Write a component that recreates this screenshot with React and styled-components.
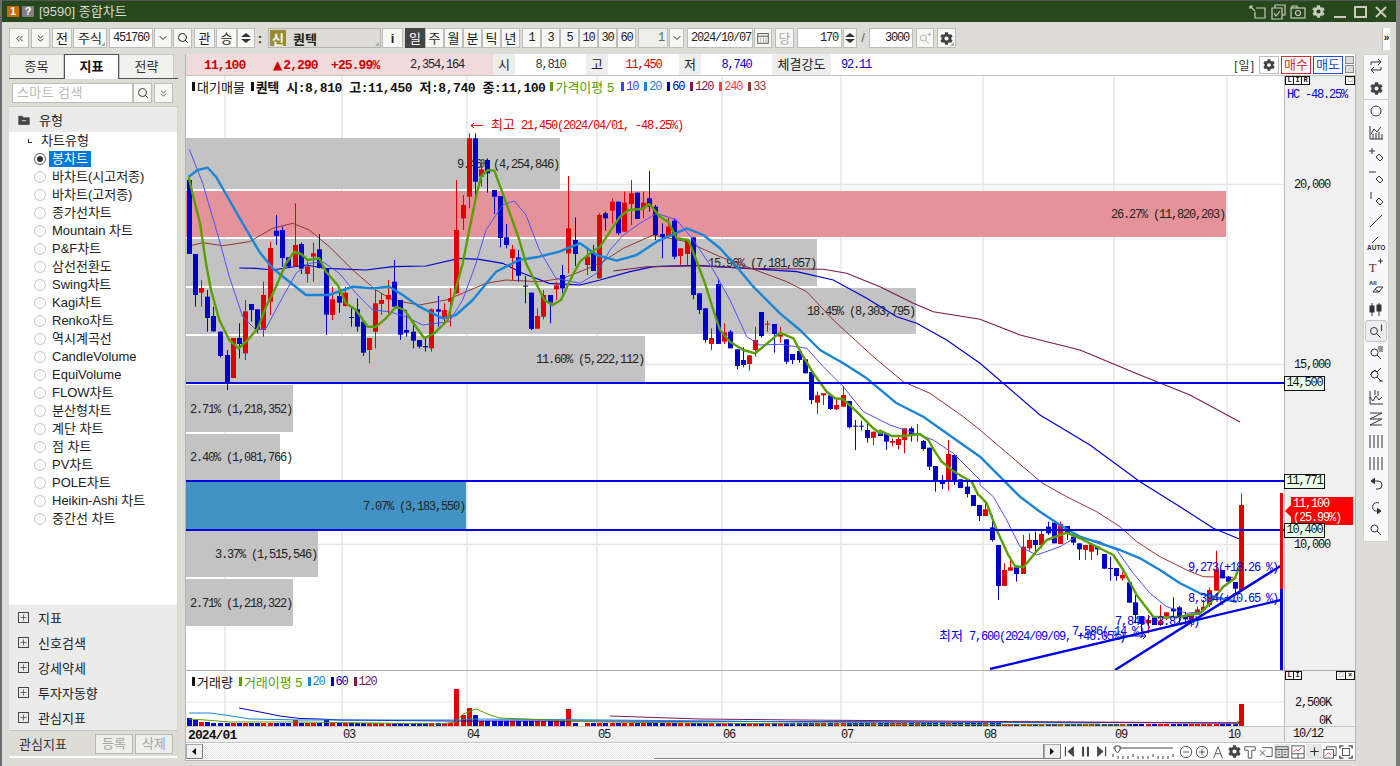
import React from "react";
import styled, { createGlobalStyle, css } from "styled-components";
import { Search, ChevronDown, ChevronsDown, ChevronsLeft, Plus } from "lucide-react";
import { FaCog } from "react-icons/fa";

const KR = `"Liberation Sans", "Noto Sans CJK KR", sans-serif`;
const mono = css`
  font-family: "Liberation Mono", "Noto Sans CJK KR", monospace;
  font-size: 12px;
  letter-spacing: -1.2px;
`;

const Global = createGlobalStyle`
  html, body { margin: 0; padding: 0; background: #7c7c7c; }
  * { box-sizing: border-box; }
`;

const Window = styled.div`
  width: 1396px; height: 766px; overflow: hidden; background: #dddcd6;
  border-left: 2px solid #6d6d6d; font-family: ${KR}; font-size: 13px; color: #222;
`;
const TitleBar = styled.div`
  height: 22px; background: #26481c; border-top: 1px solid #555; display: flex; align-items: center;
  padding-left: 5px; color: #d8dcd0; font-size: 13px;
`;
const TitleBadge = styled.span`
  width: 12px; height: 11px; background: ${p => p.$bg}; color: #fff; font: bold 11px/11px "Liberation Sans", sans-serif;
  text-align: center; margin-right: 3px;
`;
const TitleText = styled.span` margin-left: 2px; line-height: 1; `;
const WinIcons = styled.div` margin-left: auto; display: flex; align-items: center; gap: 3px; padding-right: 5px; `;

const Toolbar = styled.div` height: 32px; padding: 6px 0 0 7px; display: flex; align-items: flex-start; `;
const Btn = styled.button`
  width: ${p => p.$w}px; height: 20px; margin-left: ${p => p.$ml || 0}px; padding: 0; position: relative;
  background: ${p => (p.$on ? "#444" : "#f7f7f5")}; color: ${p => (p.$on ? "#fff" : p.$dim ? "#aaa" : "#222")};
  border: 1px solid ${p => (p.$on ? "#444" : "#bdbcb6")}; font-family: ${KR}; font-size: 13px; line-height: 1;
  display: flex; align-items: center; justify-content: center; flex: none;
  ${p => p.$num && mono}
  ${p => p.$corner && `&::after { content: ""; position: absolute; right: 1px; bottom: 1px; border: 2px solid #aaa; border-top-color: transparent; border-left-color: transparent; }`}
`;
const Field = styled.div`
  ${mono}
  width: ${p => p.$w}px; height: 20px; margin-left: ${p => p.$ml || 0}px; background: ${p => p.$bg || "#fff"};
  border: 1px solid #bdbcb6; line-height: 18px; color: ${p => p.$c || "#222"};
  text-align: ${p => p.$align || "left"}; padding: 0 3px; flex: none; white-space: nowrap; overflow: hidden;
`;
const Stepper = styled.div`
  width: ${p => p.$w}px; height: 20px; margin-left: ${p => p.$ml || 0}px; display: flex; flex-direction: column; gap: 2px;
  background: #f7f7f5; border: 1px solid #bdbcb6; align-items: center; justify-content: center; flex: none;
`;
const Tri = styled.i`
  width: 0; height: 0; border-left: 5px solid transparent; border-right: 5px solid transparent;
  ${p => (p.$down ? "border-top: 4px solid #333;" : "border-bottom: 4px solid #333;")}
`;
const DotsBtn = styled(Btn)` font-weight: bold; background: #dddcd6; border: none; `;
const NameBox = styled.div`
  width: 113px; height: 20px; margin-left: 4px; background: #dddcd6; border: 1px solid #b5b4ae; display: flex; align-items: center;
  position: relative; flex: none;
  &::after { content: ""; position: absolute; right: 1px; bottom: 1px; border: 2px solid #aaa; border-top-color: transparent; border-left-color: transparent; }
`;
const NewTag = styled.span`
  width: 16px; height: 16px; margin-left: 1px; background: #9a8c2e; color: #fff; font-size: 13px; font-weight: bold;
  display: flex; align-items: center; justify-content: center;
`;
const NameText = styled.span` margin-left: 7px; font-weight: bold; font-size: 13px; `;
const Slash = styled.span` width: 12px; text-align: center; color: #666; font: 13px/20px "Liberation Sans", sans-serif; flex: none; `;
const SideTab = styled.div`
  margin-left: auto; margin-right: 6px; width: 8px; height: 22px; background: #fafafa; border-left: 1px solid #bbb;
  font: bold 10px/20px "Liberation Sans", sans-serif; text-align: center; overflow: hidden;
`;

const Main = styled.div` display: flex; align-items: flex-start; padding-left: 7px; height: 712px; `;

const Left = styled.aside` width: 169px; height: 704px; display: flex; flex-direction: column; flex: none; `;
const Tabs = styled.div` display: flex; height: 25px; border-bottom: 1px solid #555; padding-right: 4px; `;
const Tab = styled.div`
  width: ${p => p.$w}px; text-align: center; line-height: 23px; font-size: 13px; height: ${p => (p.$on ? "25px" : "24px")};
  background: ${p => (p.$on ? "#fff" : "#f1f1ef")}; font-weight: ${p => (p.$on ? "bold" : "normal")};
  border: 1px solid ${p => (p.$on ? "#555" : "#c8c8c2")}; border-bottom: none; color: ${p => (p.$on ? "#111" : "#333")};
`;
const SearchRow = styled.div` display: flex; height: 20px; margin: 4px 0 3px 3px; `;
const SearchInput = styled.div`
  width: 121px; border: 1px solid #bdbcb6; background: #fff; color: #bbb; padding-left: 4px; line-height: 17px; font-size: 13px; letter-spacing: .4px;
`;
const SmallBtn = styled.div`
  width: ${p => p.$w}px; margin-left: ${p => p.$ml}px; background: #f7f7f5; border: 1px solid #bdbcb6; display: flex; align-items: center; justify-content: center;
`;
const Tree = styled.div` border: 1px solid #c8c8c2; border-width: 1px 0 0 0; flex: 1; display: flex; flex-direction: column; border-right: 1px solid #d6d6d0; `;
const TreeHead = styled.div`
  height: 25px; background: #ebebeb; display: flex; align-items: center; padding-left: 9px; gap: 9px; font-size: 13px;
`;
const TreeBody = styled.div` height: 473px; background: #fff; `;
const TreeRoot = styled.div` height: 18px; padding-left: 16px; display: flex; align-items: center; gap: 6px; line-height: 16px; color: #222; `;
const Corner = styled.span` width: 4px; height: 4px; border-left: 1px solid #333; border-bottom: 1px solid #333; margin-left: 3px; margin-right: 3px; `;
const Item = styled.div` height: 18px; display: flex; align-items: center; padding-left: 25px; `;
const Radio = styled.span`
  width: 12px; height: 12px; border-radius: 50%; border: 1px solid ${p => (p.$on ? "#555" : "#c4c4c4")}; background: #fff;
  display: flex; align-items: center; justify-content: center; flex: none;
  &::after { content: ""; width: 6px; height: 6px; border-radius: 50%; background: ${p => (p.$on ? "#333" : "transparent")}; }
`;
const ItemLabel = styled.span`
  margin-left: ${p => (p.$on ? "3px" : "6px")}; padding: 0 ${p => (p.$on ? "3px" : "0")}; line-height: 16px; white-space: nowrap;
  background: ${p => (p.$on ? "#0078d7" : "transparent")}; color: ${p => (p.$on ? "#fff" : "#222")};
`;
const Accordion = styled.div` height: 25px; background: #ebebeb; display: flex; align-items: center; padding-left: 9px; gap: 9px; font-size: 13px; `;
const FolderPlus = styled.span`
  width: 11px; height: 11px; border: 1px solid #444; display: flex; align-items: center; justify-content: center; color: #444;
`;
const Foot = styled.div` height: 28px; background: #dddcd6; border-top: 1px solid #c8c8c2; display: flex; align-items: center; padding: 0 4px 0 10px; border-bottom: 2px solid #fff; `;
const FootLabel = styled.span` flex: 1; font-size: 13px; color: #333; `;
const FootBtn = styled.div`
  width: 38px; height: 20px; margin-left: 2px; border: 1px solid #b9b9b3; background: #eeeeea; color: #a4a4a0; text-align: center; line-height: 18px;
`;

const ChartPanel = styled.section`
  width: 1171px; margin-left: 7px; height: 707px; border: 1px solid #b4b4b0; border-top: none; background: #fff; display: flex; flex-direction: column; flex: none;
`;
const Info = styled.div` height: 22px; display: flex; align-items: stretch; background: #fff; border-bottom: 1px solid #c2c2be; ${mono} `;
const InfoPink = styled.div` width: 307px; background: #f0dadb; position: relative; `;
const InfoVal = styled.span`
  position: absolute; left: ${p => p.$x}px; top: 4px; color: ${p => p.$c || "#222"}; line-height: 15px;
  ${p => p.$b && `font-weight: bold; font-size: 13px; letter-spacing: -.9px;`}
`;
const UpMark = styled.span` font-family: "DejaVu Sans", sans-serif; font-size: 12px; letter-spacing: 0; margin-right: 1px; `;
const InfoKey = styled.div` width: ${p => p.$w}px; background: #eeeeee; text-align: center; line-height: 21px; font-family: ${KR}; font-size: 13px; letter-spacing: 0; `;
const InfoCell = styled.div` width: ${p => p.$w}px; text-align: center; line-height: 22px; color: ${p => p.$c || "#333"}; `;
const InfoRight = styled.div` margin-left: auto; display: flex; align-items: center; gap: 2px; padding-right: 1px; `;
const DayTag = styled.span` margin-right: 2px; font-family: ${KR}; font-size: 12px; letter-spacing: 1px; color: #333; `;
const GearBtn = styled.div` width: 20px; height: 18px; border: 1px solid #bbb; display: flex; align-items: center; justify-content: center; color: #444; `;
const TradeBtn = styled.div`
  width: 30px; height: 18px; border: 1px solid ${p => p.$c}; color: ${p => p.$c}; text-align: center; line-height: 16px; font-family: ${KR}; font-size: 13px; letter-spacing: 0;
`;
const MiniCol = styled.div` display: flex; flex-direction: column; gap: 1px; `;
const Mini = styled.div` width: 9px; height: 8px; border: 1px solid #888; background: #ddd; `;

const PaneRow = styled.div` display: flex; height: ${p => p.$h}px; border-bottom: ${p => (p.$line ? "1px solid #aaa" : "none")}; `;
const Plot = styled.div` width: 1098px; position: relative; overflow: hidden; background: #fff; flex: none; `;
const PlotSvg = styled.svg` display: block; `;
const Axis = styled.div` flex: 1; background: #f0f0f0; border-left: 1px solid #bbb; position: relative; ${mono} `;
const Legend = styled.div`
  position: absolute; left: 6px; top: ${p => p.$t}px; display: flex; align-items: center; white-space: nowrap; font-size: 13px;
`;
const Mark = styled.i` width: 3px; height: 9px; background: ${p => p.$c}; margin: 0 ${p => p.$mr || 2}px 0 ${p => p.$ml || 0}px; display: inline-block; `;
const LegText = styled.span` color: ${p => p.$c || "#111"}; font-weight: ${p => (p.$b ? "bold" : "normal")}; `;
const Ohlc = styled.span` ${mono} font-size: 13px; letter-spacing: -.45px; font-weight: bold; color: #111; `;
const LegNum = styled.span` ${mono} color: ${p => p.$c}; margin-right: 2px; `;
const Tick = styled.span` position: absolute; left: ${p => p.$x}px; top: ${p => p.$y}px; color: ${p => p.$c || "#111"}; white-space: nowrap; transform: translateY(-50%); `;
const Badge = styled.span`
  position: absolute; left: -1px; top: ${p => p.$y}px; width: 41px; height: 15px; background: #e9ffe9; border: 1px solid #111; line-height: 13px; text-align: center; color: #111; z-index: 3;
`;
const PriceFlag = styled.div`
  position: absolute; left: 6px; top: 421px; width: 62px; height: 28px; background: #f00; color: #fff; line-height: 14px; padding-left: 2px; overflow: hidden; white-space: pre; z-index: 2;
`;
const FlagArrow = styled.span`
  position: absolute; left: 0; top: 429px; border: 6px solid transparent; border-left: none; border-right: 6px solid #f00; z-index: 2;
`;
const BoxGroup = styled.div` position: absolute; left: 0; top: 0; display: flex; `;
const TinyBox = styled.span`
  width: ${p => p.$w || 9}px; height: 9px; border: 1px solid #111; background: #fff; font: bold 7px/7px "Liberation Mono", monospace; text-align: center; letter-spacing: 0; color: #111; margin-right: -1px;
`;
const BoxRight = styled.div` position: absolute; right: 1px; top: 0; display: flex; `;

const XRow = styled.div` height: 17px; display: flex; border-top: 1px solid #c4c4c0; border-bottom: 1px solid #c4c4c0; background: #efefef; ${mono} `;
const XPlot = styled.div` width: 1098px; position: relative; `;
const XTick = styled.span` position: absolute; left: ${p => p.$x}px; top: 1px; font-weight: ${p => (p.$b ? "bold" : "normal")}; font-size: ${p => (p.$b ? 13 : 12)}px; letter-spacing: ${p => (p.$b ? "-.9px" : "-1.2px")}; color: #111; `;
const XEnd = styled.div` flex: 1; border-left: 1px solid #bbb; padding-left: 8px; line-height: 14px; color: #111; `;
const ScrollRow = styled.div` height: 15px; display: flex; background: #fff; margin-top: 1px; `;
const ArrowBtn = styled.div`
  width: 17px; height: 15px; background: #efefef; border: 1px solid #aaa; border-right-color: #777; border-bottom-color: #777; display: flex; align-items: center; justify-content: center; flex: none;
`;
const Track = styled.div`
  width: 841px; display: flex; justify-content: flex-end; flex: none;
  background: repeating-conic-gradient(#e4e4e4 0 25%, #ffffff 0 50%) 0 0 / 2px 2px;
`;
const Thumb = styled.div` width: 390px; background: #f0f0f0; border-right: 1px solid #888; border-bottom: 1px solid #888; `;
const Tools = styled.div` flex: 1; display: flex; align-items: center; background: #fff; `;
const ToolSlot = styled.span`
  width: ${p => p.$w || 16}px; height: 15px; display: flex; align-items: center; justify-content: center; flex: none; margin-left: ${p => p.$ml || 0}px;
  background: ${p => (p.$on ? "#e6e6e6" : "transparent")};
`;

const Right = styled.aside` width: 26px; margin-left: 7px; flex: none; display: flex; flex-direction: column; background: #f8f8f8; border: 1px solid #d2d2cc; padding-bottom: 1px; `;
const RightGroup = styled.div` display: flex; flex-direction: column; align-items: center; & + & { border-top: 1px solid #ccc; } `;
const RightSlot = styled.div`
  width: 22px; height: 22px; display: flex; align-items: center; justify-content: center; border-radius: 3px;
  ${p => p.$on && `background:#eee; border:1px solid #c2c2c2;`}
`;

const z = (ox, oy, list) => list.map(([x, y]) => [ox + x / 3, oy + y / 3]);
const pts = (...segs) => segs.flat().map(p => p.map(n => n.toFixed(1)).join(",")).join(" ");
const Z7 = l => z(186, 130, l), Z9 = l => z(580, 160, l), Z8 = l => z(980, 480, l), Z11 = l => z(880, 420, l), R = l => z(0, 0, l.map(([a, b]) => [a * 3, b * 3]));

const ma5 = pts(
  Z7([[8,142],[22,200],[42,280],[60,400],[75,480],[100,570],[130,630],[158,655],[185,630],[215,595],[240,530],[270,470],[300,400],[325,365],[345,372],[365,390],[400,385],[420,425],[455,465],[480,520],[510,540],[545,590],[570,590],[600,565],[630,530],[655,540],[690,590],[715,625],[745,610],[785,570],[800,510],[830,400],[850,300],[870,200],[885,140],[905,120],[925,122],[950,190],[975,260],[1000,330],[1020,400],[1050,460],[1075,510],[1100,525],[1125,510],[1160,435]]),
  Z9([[0,305],[30,280],[60,260],[90,215],[120,170],[145,150],[185,147],[208,132],[240,170],[265,185],[290,235],[325,240],[345,290],[375,370],[400,450],[420,510],[450,545],[490,570],[525,580],[550,560],[600,518],[640,535],[670,590],[700,640],[740,695],[765,715],[790,718],[830,755],[880,805],[900,820]]),
  Z11([[0,32],[35,48],[70,48],[120,42],[145,60],[165,95],[185,125],[215,150],[250,172],[275,185],[295,225]]),
  Z8([[0,48],[20,70],[50,150],[85,225],[105,258],[130,262],[165,220],[200,180],[260,158],[300,175],[350,200],[400,225],[430,270],[470,345],[520,410],[560,412],[600,410],[660,400],[690,370],[730,320],[765,295],[775,265]])
);
const ma20 = pts(
  Z7([[8,140],[35,120],[65,113],[90,140],[130,210],[170,280],[220,365],[260,415],[310,455],[360,495],[430,495],[500,470],[560,475],[610,470],[650,495],[700,530],[770,565],[810,555],[860,510],[930,425],[1000,390],[1060,380],[1120,365]]),
  Z9([[0,250],[50,285],[110,302],[170,285],[230,245],[320,205],[370,225],[420,265],[470,320],[520,380],[600,460],[660,510],[720,570],[790,610],[860,655],[950,730],[1030,770],[1100,820],[1200,890]]),
  Z8([[75,5],[120,50],[180,95],[240,135],[300,170],[360,190],[420,210],[480,235],[540,270],[600,310],[660,340],[720,355],[770,365]])
);
const ma10 = pts(
  Z7([[10,58],[50,160],[100,330],[130,440],[170,560],[210,600],[240,595],[280,520],[330,430],[370,400],[410,395],[460,430],[510,490],[560,540],[610,545],[660,560],[710,585],[790,575],[830,510],[870,400],[900,300],[950,225],[985,213],[1020,255],[1060,360],[1110,445]]),
  Z9([[0,370],[50,340],[90,270],[130,225],[180,190],[230,160],[290,180],[340,240],[400,330],[450,420],[500,530],[540,555],[600,553],[680,565],[730,620],[790,680],[850,755],[930,795],[1020,825],[1060,840],[1120,880],[1200,960]]),
  Z8([[0,15],[40,50],[80,120],[120,200],[170,225],[240,200],[290,170],[360,185],[410,210],[460,280],[510,340],[560,380],[620,400],[660,395]])
);
const ma60 = pts(
  Z7([[160,414],[210,415],[260,420],[360,405],[420,415],[540,420],[620,410],[720,408],[820,385],[880,388],[950,400],[1010,430],[1090,460]]),
  Z9([[0,375],[60,360],[150,335],[220,320],[350,316],[500,325],[650,335],[760,360],[860,415],[950,470],[1010,490],[1100,540],[1200,610]]),
  R([[1040,415],[1090,445]]),
  Z8([[480,5],[600,80],[700,145],[780,178]])
);
const ma120 = pts(
  Z9([[100,333],[200,320],[350,317],[500,325],[730,328],[800,340],[900,380],[1000,430],[1060,455],[1200,478]]),
  R([[1020,335],[1080,350],[1140,375],[1190,395],[1240,422]])
);
const ma33 = pts(
  Z7([[10,348],[50,338],[110,347],[190,335],[260,295],[320,280],[370,300],[430,350],[500,420],[570,480],[620,510],[700,525],[780,510],[830,490],[900,460],[960,450],[1060,455],[1130,445]]),
  Z9([[0,335],[60,310],[130,265],[220,225],[320,245],[420,290],[500,320],[620,365],[680,395],[760,480],[880,590],[970,665],[1050,700],[1150,770],[1200,810]]),
  Z8([[185,8],[260,50],[350,95],[420,140],[470,185],[540,230],[620,270],[670,290],[760,292]])
);

const raw7 = [[10,150,372,150,372,"b"],[28,372,495,372,530,"b"],[46,474,488,450,530,"r"],[64,500,564,480,605,"b"],[82,558,604,530,605,"b"],[102,605,678,605,682,"b"],[122,675,760,660,780,"b"],[140,624,744,624,744,"r"],[158,624,642,580,685,"b"],[176,544,670,510,690,"r"],[196,522,540,522,575,"b"],[214,538,600,538,610,"b"],[232,495,600,455,620,"r"],[252,354,515,335,555,"r"],[270,302,318,255,345,"b"],[288,300,384,290,410,"b"],[306,382,410,382,412,"b"],[326,345,408,220,410,"r"],[346,342,416,338,432,"b"],[364,410,432,395,458,"r"],[382,370,380,338,455,"r"],[400,358,414,312,415,"b"],[420,414,554,414,615,"b"],[438,508,555,470,570,"r"],[458,498,518,475,548,"b"],[476,488,528,470,530,"r"],[494,561,563,530,590,"b"],[514,538,590,505,605,"b"],[532,575,668,575,678,"b"],[550,624,660,624,700,"r"],[568,520,605,480,655,"r"],[586,510,522,490,555,"r"],[606,495,508,450,550,"r"],[624,455,530,390,530,"b"],[642,510,614,510,630,"b"],[660,600,608,540,620,"b"],[682,605,632,570,655,"b"],[700,630,650,630,655,"b"],[718,648,652,620,665,"b"],[736,538,655,535,665,"r"],[756,538,545,498,590,"b"],[775,540,565,520,585,"r"],[793,505,515,475,590,"r"],[811,300,490,150,490,"r"],[830,225,265,195,300,"r"],[850,25,200,10,235,"r"],[868,25,155,10,215,"b"],[886,118,140,100,170,"r"],[904,90,130,85,188,"b"],[924,180,200,180,252,"b"],[942,198,324,198,352,"b"],[960,322,345,282,355,"b"],[978,358,384,345,450,"r"],[997,382,437,360,455,"b"],[1018,467,469,438,520,"b"],[1036,488,597,488,600,"b"],[1054,558,596,535,596,"r"],[1072,495,560,480,568,"r"],[1092,495,518,495,580,"b"],[1110,466,478,455,510,"r"],[1128,435,475,405,490,"b"],[1146,295,370,138,430,"r"],[1166,330,372,262,408,"b"]];
const raw9 = [[6,210,265,210,265,"b"],[22,290,315,265,345,"r"],[40,278,333,255,333,"b"],[58,165,355,160,355,"r"],[76,160,175,155,212,"b"],[97,125,152,115,190,"r"],[115,125,220,125,225,"b"],[133,128,215,95,215,"r"],[152,100,132,60,195,"r"],[172,98,177,98,177,"b"],[190,128,145,95,175,"r"],[208,115,140,33,155,"b"],[226,140,225,135,240,"b"],[246,222,232,190,295,"b"],[265,200,228,175,235,"r"],[283,182,290,175,298,"b"],[301,265,288,265,315,"r"],[320,240,282,240,315,"r"],[340,232,405,232,418,"b"],[358,400,450,400,462,"b"],[376,445,540,445,548,"b"],[394,534,552,505,570,"r"],[413,372,552,355,552,"b"],[432,517,545,490,552,"r"],[450,515,565,510,565,"b"],[470,568,618,568,628,"b"],[488,600,615,562,622,"b"],[508,586,612,586,632,"r"],[526,540,570,500,590,"r"],[544,456,528,456,533,"b"],[562,491,493,482,515,"r"],[582,492,522,492,578,"b"],[600,522,530,500,548,"r"],[618,538,605,538,612,"b"],[637,582,600,582,612,"b"],[656,573,600,573,608,"b"],[676,598,640,598,640,"b"],[694,636,720,636,732,"b"],[712,706,728,695,762,"r"],[730,700,706,700,735,"r"],[750,706,747,706,750,"b"],[769,735,748,715,750,"r"],[788,705,740,678,740,"r"],[806,723,802,723,805,"b"],[826,797,799,780,870,"b"],[844,797,799,782,812,"b"],[862,810,834,788,848,"b"],[880,815,833,815,855,"r"]];
const raw11 = [[0,40,48,40,48,"b"],[18,40,65,40,90,"b"],[37,63,68,55,78,"r"],[55,57,75,45,88,"r"],[73,25,60,25,100,"r"],[92,25,42,20,65,"b"],[112,41,43,12,65,"r"],[130,63,87,60,92,"b"],[148,83,140,83,150,"b"],[166,138,185,138,215,"b"],[185,182,192,165,207,"b"],[205,102,180,60,212,"r"],[223,105,180,105,195,"b"],[241,178,204,178,204,"b"],[260,200,222,183,232,"b"],[280,225,258,225,258,"b"],[298,255,288,255,303,"b"]];
const raw8 = [[15,88,108,60,108,"r"],[35,142,180,105,185,"b"],[55,195,318,195,360,"b"],[73,270,318,250,318,"r"],[91,262,272,230,272,"r"],[109,262,282,262,305,"b"],[128,200,282,165,282,"r"],[148,180,205,160,212,"r"],[166,180,195,155,225,"b"],[184,162,195,150,205,"r"],[203,140,160,125,165,"b"],[221,128,190,128,190,"b"],[240,132,192,125,192,"r"],[260,138,160,138,180,"b"],[278,170,188,160,195,"b"],[297,190,208,190,240,"b"],[316,195,210,195,240,"r"],[334,192,215,192,240,"r"],[352,200,208,200,225,"b"],[371,222,266,222,266,"b"],[391,264,266,230,302,"b"],[409,264,288,264,302,"b"],[427,285,295,275,302,"r"],[446,307,368,307,368,"b"],[465,367,405,345,430,"b"],[484,408,432,408,455,"b"],[503,420,430,405,460,"r"],[521,412,435,412,435,"b"],[540,422,435,375,438,"r"],[558,397,415,397,420,"r"],[578,386,394,352,410,"b"],[596,382,408,378,430,"b"],[615,408,418,395,440,"b"],[633,402,420,400,440,"r"],[652,388,405,380,405,"r"],[670,380,390,360,395,"r"],[688,330,375,322,380,"r"],[707,268,332,212,332,"r"],[726,270,295,270,295,"b"],[745,290,305,288,305,"b"],[764,306,326,306,340,"b"],[782,75,330,40,330,"r"]];
const conv = (ox, oy, l) => l.map(([x, t, b, wt, wb, c]) => ({ x: ox + x / 3, t: oy + t / 3, b: oy + b / 3, wt: oy + wt / 3, wb: oy + wb / 3, c }));
const candles = [...conv(186, 130, raw7), ...conv(580, 160, raw9.slice(1)), ...conv(880, 420, raw11), ...conv(980, 480, raw8)];
const COL = { r: "#e00000", b: "#0000c8" };

const volH = x => {
  if (x < 192) return 8;
  if (x < 198) return 6;
  if (x < 210) return 4;
  if (Math.abs(x - 456) < 2) return 37;
  if (Math.abs(x - 463) < 2) return 11;
  if (Math.abs(x - 469) < 2) return 18;
  if (Math.abs(x - 475) < 2) return 11;
  if (Math.abs(x - 568) < 2) return 17;
  if (x > 1238) return 22;
  if (x > 480 && x < 570) return 5;
  if (x > 1000) return 2;
  if (Math.abs(x - 295) < 2 || Math.abs(x - 326) < 2) return 6;
  return 3;
};

const grids = [225, 342, 467, 597, 722, 841, 983, 1114, 1227];
const bars = [
  { y: 138, h: 51, r: 560, t: "9.46% (4,254,846)" },
  { y: 191, h: 46, r: 1226, t: "26.27% (11,820,203)", c: "#e4939a" },
  { y: 239, h: 47, r: 817, t: "15.96% (7,181,057)" },
  { y: 288, h: 46, r: 916, t: "18.45% (8,303,795)" },
  { y: 336, h: 46, r: 645, t: "11.60% (5,222,112)" },
  { y: 385, h: 47, r: 293, t: "2.71% (1,218,352)" },
  { y: 434, h: 46, r: 280, tx: 293, t: "2.40% (1,081,766)" },
  { y: 482, h: 47, r: 466, t: "7.07% (3,183,550)", c: "#4292c6" },
  { y: 531, h: 46, r: 318, t: "3.37% (1,515,546)" },
  { y: 579, h: 47, r: 293, t: "2.71% (1,218,322)" },
];
const ChartText = styled.text` ${mono} fill: ${p => p.$c || "#222"}; `;
const KrSpan = styled.tspan` font-family: ${KR}; font-size: 13px; letter-spacing: 0; `;

const PriceChart = () => (
  <PlotSvg width="1098" height="594" viewBox="186 76 1098 594">
    {grids.map(x => <line key={x} x1={x} x2={x} y1="76" y2="670" stroke="#e6e6e6" strokeWidth="1.5" />)}
    {[184.5, 364.5, 544.5].map(y => <line key={y} x1="186" x2="1284" y1={y} y2={y} stroke="#e6e6e6" strokeWidth="1.5" />)}
    {bars.map(b => <rect key={b.y} x="186" y={b.y} width={b.r - 186} height={b.h} fill={b.c || "#c3c3c3"} />)}
    {bars.map(b => (
      <ChartText key={b.t} x={(b.tx || b.r) - 1} y={b.y + b.h / 2 + 4} textAnchor="end">{b.t}</ChartText>
    ))}
    <polyline points={ma60} fill="none" stroke="#0000d0" strokeWidth="1.2" />
    <polyline points={ma120} fill="none" stroke="#7a1a50" strokeWidth="1.1" />
    <polyline points={ma33} fill="none" stroke="#943434" strokeWidth="1" />
    {candles.map((c, i) => (
      <g key={i} fill={COL[c.c]}>
        <rect x={Math.round(c.x)} y={c.wt} width="1" height={Math.max(c.wb - c.wt, 1)} />
        <rect x={Math.round(c.x) - 2} y={c.t} width="5" height={Math.max(c.b - c.t, 1)} />
      </g>
    ))}
    <polyline points={ma10} fill="none" stroke="#5050ff" strokeWidth="1" />
    <polyline points={ma20} fill="none" stroke="#1a85d6" strokeWidth="2.4" strokeLinejoin="round" />
    <polyline points={ma5} fill="none" stroke="#5a9e00" strokeWidth="2.4" strokeLinejoin="round" />
    {[383, 481, 530].map(y => <line key={y} x1="186" x2="1284" y1={y} y2={y} stroke="#0000e6" strokeWidth="2" />)}
    <line x1="990" y1="669" x2="1281" y2="600" stroke="#0000e6" strokeWidth="2.4" />
    <line x1="1115" y1="670" x2="1282" y2="565" stroke="#0000e6" strokeWidth="2.4" />
    <rect x="1280" y="493" width="3" height="96" fill="#f00000" />
    <rect x="1280" y="589" width="3" height="81" fill="#0000e6" />
    <path d="M471 125.500h12M471 125.500l3-2.500M471 125.500l3 2.500" fill="none" stroke="#e00000" />
    <ChartText $c="#e00000" x="491" y="129"><KrSpan>최고</KrSpan> 21,450(2024/04/01, -48.25%)</ChartText>
    <ChartText $c="#0000e6" x="1188" y="571">9,273(+18.26 %)</ChartText>
    <ChartText $c="#0000e6" x="1188" y="602">8,394(+10.65 %)</ChartText>
    <ChartText $c="#0000e6" x="1115" y="625">7,840(+3.82 %)</ChartText>
    <ChartText $c="#0000e6" x="1072" y="635">7,586(-14 %)</ChartText>
    <ChartText $c="#0000e6" x="939" y="640"><KrSpan>최저</KrSpan> 7,600(2024/09/09, +46.05%)</ChartText>
    <path d="M1120 636h26M1146 636l-3-3M1146 636l-3 3" fill="none" stroke="#0000e6" />
  </PlotSvg>
);

const VolumeChart = () => (
  <PlotSvg width="1098" height="56" viewBox="186 671 1098 56">
    {grids.map(x => <line key={x} x1={x} x2={x} y1="671" y2="727" stroke="#e6e6e6" strokeWidth="1.5" />)}
    <line x1="186" x2="1284" y1="702" y2="702" stroke="#e6e6e6" />
    {candles.map((c, i) => <rect key={i} x={Math.round(c.x) - 2} y={726 - volH(c.x)} width="5" height={volH(c.x)} fill={COL[c.c]} />)}
    <polyline points="239,708 260,712 280,716 300,718.5 320,719 340,720 450,721 610,721 1240,723" fill="none" stroke="#0000c8" strokeWidth="1" />
    <polyline points="189,713 210,713 225,715 250,719 300,720 460,720 470,719 610,720 800,722 1100,723" fill="none" stroke="#1a85d6" strokeWidth="1" />
    <polyline points="189,719 205,720 230,722 300,722 440,724 456,722 463,714 476,709 490,715 500,718 600,722 800,724 1130,725" fill="none" stroke="#5a9e00" strokeWidth="1" />
    <polyline points="610,716 700,719 800,720 1000,721.5 1240,723" fill="none" stroke="#7a1a50" strokeWidth="1" />
    <polyline points="1233,725 1237,722 1240,720" fill="none" stroke="#5a9e00" strokeWidth="1" />
  </PlotSvg>
);

const S = ({ size = 16, children, color = "#333", sw = 1 }) => (
  <svg width={size} height={size} viewBox="0 0 16 16" fill="none" stroke={color} strokeWidth={sw}>{children}</svg>
);
const Lens = () => <><circle cx="6.5" cy="7.5" r="3.5" /><path d="M9 10l4 4" /></>;
const Pencil = () => <path d="M8 10l3-3 4 4-3 3z M9 11l3 3" />;
const Cog = ({ s = 13 }) => <FaCog size={s} color="#444" />;
const sideIcons = [
  <S><circle cx="8" cy="8" r="5" /></S>,
  <S><path d="M2 1v13h13" /><path d="M3 9l3-5 3 3 4-5" /><path d="M5 14V9M8 14V8M11 14V7M14 14V9" /></S>,
  <S><path d="M1 4h6M4 1v6" /><Pencil /></S>,
  <S><path d="M1 3h7" /><Pencil /></S>,
  <S><path d="M3 1v7" /><Pencil /></S>,
  <S><path d="M2 14L14 2" /></S>,
  <svg width="20" height="16" viewBox="0 0 20 16"><path d="M6 8l6-6" stroke="#333" /><text x="1" y="15" fontSize="6.5" fontWeight="bold" fontFamily="Liberation Sans" fill="#333">AUTO</text></svg>,
  <svg width="16" height="16" viewBox="0 0 16 16"><text x="1" y="15" fontSize="12" fontFamily="Liberation Serif" fill="#333">T</text><path d="M10 4h5M12.500 1.500v5" stroke="#333" /></svg>,
  <svg width="16" height="16" viewBox="0 0 16 16"><text x="1" y="6" fontSize="6" fontFamily="Liberation Sans" fontWeight="bold" fill="#333">All</text><path d="M5 13l4-5h6l-4 5zM7 10l4 3" fill="none" stroke="#333" /></svg>,
  <S><path d="M4 2v13M11 2v13" /><rect x="2" y="5" width="4" height="6" fill="#333" /><rect x="9" y="4" width="4" height="6" fill="#333" /></S>,
  <svg width="16" height="16" viewBox="0 0 16 16" fill="none" stroke="#333"><circle cx="6" cy="8" r="3.5" /><path d="M8.5 10.5l4 4" /><path d="M13.5 2v6M13 2h1" /></svg>,
  <S><Lens /><path d="M10 2h5M10 4h5M11 6h4" /></S>,
  <S><Lens /><path d="M2 8l5-5 2 2 4-4" /><path d="M11 14h4" /></S>,
  <S><path d="M2 8l3 4 3-5 3 4 3-3" /><path d="M2 2v13h13" /><path d="M7 1v5M10 2v5" /></S>,
  <S><path d="M2 2h12L2 8h12L2 14h12" /></S>,
  <S><path d="M2 2v13M6 2v13M10 2v13M14 2v13" /></S>,
  <S><path d="M2 2v13M6 2v13M10 2v13M14 2v13" /></S>,
  <S><path d="M5 4h5a4 4 0 1 1 0 8H8" /><path d="M7 1L3 4l4 3" fill="#333" /></S>,
  <S><path d="M11 12H7a4 4 0 1 1 4-8" /><path d="M9 9l4 3-4 3" fill="#333" /></S>,
  <S><Lens /></S>,
];

const WinIcon = ({ children, w = 16 }) => (
  <svg width={w} height="16" viewBox={`0 0 ${w} 16`} fill="none" stroke="#c8cbbd" strokeWidth="1.2">{children}</svg>
);

const list = ["봉차트","바차트(시고저종)","바차트(고저종)","종가선차트","Mountain 차트","P&F차트","삼선전환도","Swing차트","Kagi차트","Renko차트","역시계곡선","CandleVolume","EquiVolume","FLOW차트","분산형차트","계단 차트","점 차트","PV차트","POLE차트","Heikin-Ashi 차트","중간선 차트"];
const accordions = ["지표","신호검색","강세약세","투자자동향","관심지표"];

export default function App() {
  return (
    <Window>
      <Global />
      <TitleBar>
        <TitleBadge $bg="#c96a00">1</TitleBadge>
        <TitleBadge $bg="#808080">?</TitleBadge>
        <TitleText>[9590] 종합차트</TitleText>
        <WinIcons>
          <WinIcon w={20}><path d="M2 2l5 5M2 2h3M2 2v3M8 4h9v10H7V8" /></WinIcon>
          <WinIcon><path d="M4 4V1h10v10h-3M1 4h10v11H1z M3 9l2 3 4-5" /></WinIcon>
          <WinIcon><rect x="1" y="4" width="14" height="10" /><circle cx="8" cy="9" r="2.5" /><path d="M2 4V2h5v2" /></WinIcon>
          <FaCog size={13} color="#c8cbbd" style={{ margin: "0 3px" }} />
          <WinIcon w={18}><path d="M3 13h12" strokeWidth="2" /></WinIcon>
          <WinIcon w={18}><rect x="3" y="3" width="11" height="10" strokeWidth="2" /></WinIcon>
          <WinIcon w={18}><path d="M3 3l10 10M13 3L3 13" strokeWidth="2" /></WinIcon>
        </WinIcons>
      </TitleBar>

      <Toolbar>
        <Btn $w={20}><ChevronsLeft size={11} /></Btn>
        <Btn $w={19} $ml={2}><ChevronsDown size={11} /></Btn>
        <Btn $w={20} $ml={2}>전</Btn>
        <Btn $w={34} $ml={1} $corner>주식</Btn>
        <Field $w={44} $ml={2}>451760</Field>
        <Btn $w={18} $ml={1}><ChevronDown size={12} /></Btn>
        <Btn $w={19} $ml={1}><Search size={12} /></Btn>
        <Btn $w={21} $ml={2}>관</Btn>
        <Btn $w={21} $ml={1}>승</Btn>
        <Stepper $w={18}><Tri /><Tri $down /></Stepper>
        <DotsBtn $w={8} $ml={1}>:</DotsBtn>
        <NameBox><NewTag>신</NewTag><NameText>퀀텍</NameText></NameBox>
        <Btn $w={21} $ml={1}><b>i</b></Btn>
        <Btn $w={20} $ml={2} $on>일</Btn>
        {["주","월","분","틱","년"].map(t => <Btn key={t} $w={19}>{t}</Btn>)}
        <Btn $w={19} $ml={2} $num>1</Btn>
        {["3","5","10","30","60"].map(t => <Btn key={t} $w={19} $num>{t}</Btn>)}
        <Field $w={30} $ml={2} $bg="#eeeeea" $c="#666" $align="right">1</Field>
        <Btn $w={15} $ml={1}><ChevronDown size={12} /></Btn>
        <Field $w={66} $ml={3}>2024/10/07</Field>
        <Btn $w={18} $ml={1}>
          <S size={14} color="#444"><rect x="2" y="3" width="12" height="11" /><path d="M2 6h12M5 9h1M8 9h1M11 9h1M5 11.500h1M8 11.500h1M11 11.500h1" /></S>
        </Btn>
        <Btn $w={19} $ml={3} $dim>당</Btn>
        <Field $w={45} $ml={3} $align="right">170</Field>
        <Stepper $w={14} $ml={1}><Tri /><Tri $down /></Stepper>
        <Slash>/</Slash>
        <Field $w={44} $align="right">3000</Field>
        <Btn $w={18} $ml={3}><S size={14} color="#aaa"><circle cx="6" cy="8" r="3.500" /><path d="M8.500 10.500l4 4M11 4h4M13 2v4" /></S></Btn>
        <Btn $w={19} $ml={3} $corner><Cog /></Btn>
        <SideTab>»</SideTab>
      </Toolbar>

      <Main>
        <Left>
          <Tabs>
            <Tab $w={55}>종목</Tab>
            <Tab $w={55} $on>지표</Tab>
            <Tab $w={55}>전략</Tab>
          </Tabs>
          <SearchRow>
            <SearchInput>스마트 검색</SearchInput>
            <SmallBtn $w={19} $ml={0}><Search size={12} color="#444" /></SmallBtn>
            <SmallBtn $w={19} $ml={2}><ChevronsDown size={11} color="#555" /></SmallBtn>
          </SearchRow>
          <Tree>
            <TreeHead>
              <S size={12} color="#444"><path d="M1 3h5l1 2h8v9H1z" fill="#444" /><path d="M5 9h6" stroke="#fff" /></S>
              유형
            </TreeHead>
            <TreeBody>
              <TreeRoot><Corner />차트유형</TreeRoot>
              {list.map((t, i) => (
                <Item key={t}><Radio $on={i === 0} /><ItemLabel $on={i === 0}>{t}</ItemLabel></Item>
              ))}
            </TreeBody>
            {accordions.map(t => (
              <Accordion key={t}><FolderPlus><Plus size={9} /></FolderPlus>{t}</Accordion>
            ))}
            <Foot>
              <FootLabel>관심지표</FootLabel>
              <FootBtn>등록</FootBtn>
              <FootBtn>삭제</FootBtn>
            </Foot>
          </Tree>
        </Left>

        <ChartPanel>
          <Info>
            <InfoPink>
              <InfoVal $x={18} $c="#d00000" $b>11,100</InfoVal>
              <InfoVal $x={87} $c="#d00000" $b><UpMark>▲</UpMark>2,290</InfoVal>
              <InfoVal $x={145} $c="#d00000" $b>+25.99%</InfoVal>
              <InfoVal $x={224}>2,354,164</InfoVal>
            </InfoPink>
            <InfoKey $w={22}>시</InfoKey>
            <InfoCell $w={71}>8,810</InfoCell>
            <InfoKey $w={22}>고</InfoKey>
            <InfoCell $w={71} $c="#d00000">11,450</InfoCell>
            <InfoKey $w={22}>저</InfoKey>
            <InfoCell $w={71} $c="#0000c8">8,740</InfoCell>
            <InfoKey $w={59}>체결강도</InfoKey>
            <InfoCell $w={50} $c="#0000c8">92.11</InfoCell>
            <InfoRight>
              <DayTag>[일]</DayTag>
              <GearBtn><Cog s={12} /></GearBtn>
              <TradeBtn $c="#d03030">매수</TradeBtn>
              <TradeBtn $c="#2050d0">매도</TradeBtn>
              <MiniCol><Mini /><Mini /></MiniCol>
            </InfoRight>
          </Info>

          <PaneRow $h={595} $line>
            <Plot>
              <PriceChart />
              <Legend $t={1}>
                <Mark $c="#111" />
                <LegText>대기매물</LegText>
                <Mark $c="#111" $ml={6} />
                <Ohlc>퀀텍 시:8,810 고:11,450 저:8,740 종:11,100</Ohlc>
                <Mark $c="#5a9e00" $ml={5} />
                <LegText $c="#5a9e00">가격이평 5</LegText>
                <Mark $c="#4040ff" $ml={7} /><LegNum $c="#4040ff">10</LegNum>
                <Mark $c="#1a85d6" $ml={4} /><LegNum $c="#1a85d6">20</LegNum>
                <Mark $c="#0000c8" $ml={4} /><LegNum $c="#0000c8">60</LegNum>
                <Mark $c="#7a1a50" $ml={4} /><LegNum $c="#7a1a50">120</LegNum>
                <Mark $c="#ff4040" $ml={4} /><LegNum $c="#ff4040">240</LegNum>
                <Mark $c="#943434" $ml={4} /><LegNum $c="#943434">33</LegNum>
              </Legend>
            </Plot>
            <Axis>
              <BoxGroup>
                <TinyBox>L</TinyBox><TinyBox>I</TinyBox><TinyBox>R</TinyBox>
              </BoxGroup>
              <BoxRight><TinyBox $w={10}>□</TinyBox></BoxRight>
              <Tick $x={2} $y={19} $c="#0000d0">HC -48.25%</Tick>
              <Tick $x={9} $y={109}>20,000</Tick>
              <Tick $x={9} $y={289}>15,000</Tick>
              <Tick $x={9} $y={469}>10,000</Tick>
              <Badge $y={300}>14,500</Badge>
              <Badge $y={398}>11,771</Badge>
              <FlagArrow />
              <PriceFlag>{"11,100\n(25.99%)"}</PriceFlag>
              <Badge $y={447}>10,400</Badge>
            </Axis>
          </PaneRow>

          <PaneRow $h={55}>
            <Plot>
              <VolumeChart />
              <Legend $t={1}>
                <Mark $c="#111" />
                <LegText>거래량</LegText>
                <Mark $c="#5a9e00" $ml={6} />
                <LegText $c="#5a9e00">거래이평 5</LegText>
                <Mark $c="#1a85d6" $ml={5} /><LegNum $c="#1a85d6">20</LegNum>
                <Mark $c="#0000c8" $ml={4} /><LegNum $c="#0000c8">60</LegNum>
                <Mark $c="#7a1a50" $ml={4} /><LegNum $c="#7a1a50">120</LegNum>
              </Legend>
            </Plot>
            <Axis>
              <BoxGroup><TinyBox>L</TinyBox><TinyBox>I</TinyBox></BoxGroup>
              <BoxRight><TinyBox $w={10}>□</TinyBox><TinyBox $w={10}>×</TinyBox></BoxRight>
              <Tick $x={10} $y={32}>2,500K</Tick>
              <Tick $x={34} $y={50}>0K</Tick>
            </Axis>
          </PaneRow>

          <XRow>
            <XPlot>
              <XTick $x={2} $b>2024/01</XTick>
              <XTick $x={157}>03</XTick>
              <XTick $x={281}>04</XTick>
              <XTick $x={412}>05</XTick>
              <XTick $x={537}>06</XTick>
              <XTick $x={655}>07</XTick>
              <XTick $x={798}>08</XTick>
              <XTick $x={929}>09</XTick>
              <XTick $x={1042}>10</XTick>
            </XPlot>
            <XEnd>10/12</XEnd>
          </XRow>

          <ScrollRow>
            <ArrowBtn><svg width="5" height="7"><path d="M4 0v7L0 3.500z" fill="#111" /></svg></ArrowBtn>
            <Track><Thumb /></Track>
            <ArrowBtn><svg width="5" height="7"><path d="M0 0v7l4-3.500z" fill="#111" /></svg></ArrowBtn>
            <Tools>
              <ToolSlot><S size={13} color="#444"><path d="M3 2v12" strokeWidth="1.500" /><path d="M13 2v12L6 8z" fill="#444" /></S></ToolSlot>
              <ToolSlot><S size={13} color="#444"><path d="M5 2v12M11 2v12" strokeWidth="2.500" /></S></ToolSlot>
              <ToolSlot><S size={13} color="#444"><path d="M13 2v12" strokeWidth="1.500" /><path d="M3 2v12l7-6z" fill="#444" /></S></ToolSlot>
              <ToolSlot $w={62} $ml={3}>
                <svg width="62" height="15" fill="none" stroke="#444"><path d="M1 4h60" /><path d="M3 2h5v4l-2.500 3-2.500-3z" fill="#fff" />{Array.from({ length: 13 }, (_, i) => <path key={i} d={`M${1 + i * 5} ${i % 4 === 0 ? 10 : 12}v3`} />)}</svg>
              </ToolSlot>
              <ToolSlot $ml={4}><S size={14} color="#444"><circle cx="8" cy="8" r="6.500" /><path d="M4.500 8h7" /></S></ToolSlot>
              <ToolSlot><S size={14} color="#444"><circle cx="8" cy="8" r="6.500" /><path d="M4.500 8h7M8 4.500v7" /></S></ToolSlot>
              <ToolSlot><S size={14} color="#444"><path d="M3 15L8 2l5 13M5 10h6" /></S></ToolSlot>
              <ToolSlot><Cog s={13} /></ToolSlot>
              <ToolSlot><S size={14} color="#444"><path d="M2 2h12v4H10v9H6V6H2z" /></S></ToolSlot>
              <ToolSlot><S size={14} color="#444"><path d="M4 3h11v10H8M1 6l6 6M7 6l-6 6" /></S></ToolSlot>
              <ToolSlot $on><S size={14} color="#444"><rect x="1" y="2" width="14" height="12" /><path d="M1 5h14M8 5v9M3 8h3M10 8h3M3 11h3M10 11h3" /></S></ToolSlot>
              <ToolSlot><S size={14} color="#444"><rect x="1" y="1" width="14" height="14" /><path d="M1 10h14M8 10v5" /><path d="M3 8l3-3 2 2 4-4" stroke="#d03030" /></S></ToolSlot>
              <ToolSlot $on><Plus size={13} color="#333" /></ToolSlot>
              <ToolSlot><S size={14} color="#444"><rect x="1" y="5" width="11" height="10" /><path d="M4 5V2h11v10h-3" /><path d="M3 12l3-3 3 2" stroke="#d03030" /></S></ToolSlot>
              <ToolSlot><S size={14} color="#444"><path d="M1 4V1h4M11 1h4v3M15 12v3h-4M5 15H1v-3" strokeWidth="1.500" /><rect x="4" y="4" width="8" height="8" /></S></ToolSlot>
            </Tools>
          </ScrollRow>
        </ChartPanel>

        <Right>
          <RightGroup>
            <RightSlot><S><path d="M3 7V4h10M10 1l3 3-3 3M13 9v3H3M6 15l-3-3 3-3" /></S></RightSlot>
            <RightSlot><Cog /></RightSlot>
          </RightGroup>
          <RightGroup>
            {sideIcons.map((ic, i) => <RightSlot key={i} $on={i === 10}>{ic}</RightSlot>)}
          </RightGroup>
        </Right>
      </Main>
    </Window>
  );
}
